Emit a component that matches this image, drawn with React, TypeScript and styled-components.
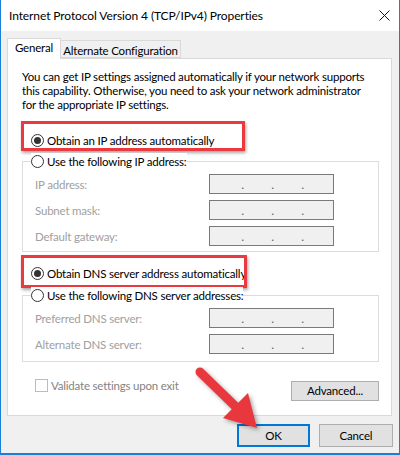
import React from "react";
import styled, { createGlobalStyle } from "styled-components";

const Global = createGlobalStyle`
  html, body { margin: 0; padding: 0; background: #ffffff; }
  body { font-family: Lato, "Noto Sans", Arial, sans-serif; }
  * { box-sizing: border-box; }
`;

const Window = styled.div`
  position: relative;
  width: 400px;
  height: 455px;
  border: 1px solid #1a7fd6;
  border-top: none;
  border-bottom-width: 2px;
  background: #f0f0f0;
  display: flex;
  flex-direction: column;
  font-size: 11.5px;
  letter-spacing: -0.2px;
  color: #000;
  overflow: hidden;
`;

const TitleBar = styled.div`
  height: 31px;
  flex: none;
  background: #ffffff;
  display: flex;
  align-items: center;
  justify-content: space-between;
  padding-left: 8px;
`;

const Title = styled.div`
  font-size: 12px;
  letter-spacing: -0.1px;
  line-height: 16px;
  color: #000;
  white-space: nowrap;
`;

const CloseBox = styled.div`
  width: 30px;
  height: 31px;
  display: flex;
  align-items: center;
  justify-content: center;
`;

const Body = styled.div`
  flex: 1;
  display: flex;
  flex-direction: column;
  padding: 7px 7px 0 6px;
`;

const Tabs = styled.div`
  display: flex;
  align-items: flex-end;
  height: 20px;
  flex: none;
`;

const Tab = styled.div<{ $active?: boolean; $w: number }>`
  width: ${(p) => p.$w}px;
  height: ${(p) => (p.$active ? 21 : 18)}px;
  margin-bottom: ${(p) => (p.$active ? -1 : 0)}px;
  margin-left: ${(p) => (p.$active ? 0 : -1)}px;
  border: 1px solid #d9d9d9;
  border-bottom: ${(p) => (p.$active ? "none" : "1px solid #d9d9d9")};
  background: ${(p) => (p.$active ? "#ffffff" : "#f0f0f0")};
  position: relative;
  z-index: ${(p) => (p.$active ? 2 : 1)};
  text-align: center;
  line-height: 14px;
  padding-top: ${(p) => (p.$active ? 2 : 3)}px;
  white-space: nowrap;
`;

const Panel = styled.div`
  height: 358px;
  flex: none;
  background: #ffffff;
  border: 1px solid #d9d9d9;
  display: flex;
  flex-direction: column;
  padding: 0 12px 0 14px;
  position: relative;
  z-index: 1;
`;

const Intro = styled.p`
  margin: 11px 0 0 0;
  line-height: 14px;
  color: #000;
  white-space: nowrap;
`;

const RadioRow = styled.label<{ $mt?: number }>`
  position: relative;
  display: flex;
  align-items: center;
  gap: 3px;
  height: 16px;
  margin-top: ${(p) => p.$mt ?? 0}px;
  margin-left: 9px;
  white-space: nowrap;
  background: #fff;
`;

const RadioCircle = styled.span<{ $checked?: boolean }>`
  width: 13px;
  height: 13px;
  border-radius: 50%;
  border: 1px solid #333333;
  background: #fff;
  display: flex;
  align-items: center;
  justify-content: center;
  flex: none;
  &::after {
    content: "";
    width: 7px;
    height: 7px;
    border-radius: 50%;
    background: ${(p) => (p.$checked ? "#333333" : "transparent")};
  }
`;

const Highlight = styled.span<{ $top: number; $h: number; $w: number }>`
  position: absolute;
  left: -10px;
  top: ${(p) => p.$top}px;
  width: ${(p) => p.$w}px;
  height: ${(p) => p.$h}px;
  border: 3px solid #ea3a3f;
  box-shadow: 1px 2px 3px rgba(0, 0, 0, 0.35);
  pointer-events: none;
`;

const Group = styled.fieldset<{ $mt: number; $pb: number }>`
  margin: ${(p) => p.$mt}px 0 0 0;
  width: 357px;
  padding: 0 0 ${(p) => p.$pb}px 0;
  border: 1px solid #dcdcdc;
  min-width: 0;
`;

const Legend = styled.legend`
  padding: 0;
  margin-left: 8px;
  & > label {
    margin-left: 0;
  }
`;

const Fields = styled.div`
  display: flex;
  flex-direction: column;
  gap: 6px;
  padding: 5px 0 0 12px;
`;

const FieldRow = styled.div`
  display: flex;
  align-items: center;
  height: 20px;
`;

const FieldLabel = styled.span`
  width: 174px;
  color: #a0a0a0;
  white-space: nowrap;
`;

const IpBox = styled.div`
  width: 125px;
  height: 20px;
  border: 1px solid #7a7a7a;
  background: #f0f0f0;
  display: flex;
  align-items: center;
  gap: 27px;
  padding-left: 31px;
`;

const Dot = styled.span`
  width: 3px;
  text-align: center;
  color: #5a5a8a;
  line-height: 12px;
  font-size: 12px;
  position: relative;
  top: 1px;
`;

const Footer = styled.div`
  margin-top: 16px;
  display: flex;
  justify-content: space-between;
  align-items: flex-start;
  padding-left: 13px;
`;

const CheckRow = styled.label`
  display: flex;
  align-items: center;
  gap: 3px;
  height: 14px;
  color: #838383;
  white-space: nowrap;
`;

const CheckBox = styled.span`
  width: 13px;
  height: 13px;
  border: 1px solid #bcbcbc;
  background: #fff;
  flex: none;
`;

const Button = styled.button<{ $w: number; $h: number; $primary?: boolean; $mt?: number }>`
  width: ${(p) => p.$w}px;
  height: ${(p) => p.$h}px;
  margin-top: ${(p) => p.$mt ?? 0}px;
  background: #e1e1e1;
  border: ${(p) => (p.$primary ? "2px solid #0078d7" : "1px solid #adadad")};
  font-family: inherit;
  font-size: 11.5px;
  letter-spacing: -0.2px;
  color: #000;
  padding: 0;
  line-height: 14px;
`;

const ButtonRow = styled.div`
  display: flex;
  justify-content: flex-end;
  gap: 9px;
  margin-top: 8px;
  margin-right: -1px;
`;

const ArrowSvg = styled.svg`
  position: absolute;
  left: 185px;
  top: 358px;
  z-index: 5;
  filter: drop-shadow(2px 2px 2px rgba(0, 0, 0, 0.35));
  pointer-events: none;
`;

function IpField() {
  return (
    <IpBox>
      <Dot>.</Dot>
      <Dot>.</Dot>
      <Dot>.</Dot>
    </IpBox>
  );
}

export default function App() {
  return (
    <>
      <Global />
      <Window>
        <TitleBar>
          <Title>Internet Protocol Version 4 (TCP/IPv4) Properties</Title>
          <CloseBox>
            <svg width="11" height="11" viewBox="0 0 11 11">
              <path d="M0.5 0.5 L10.5 10.5 M10.5 0.5 L0.5 10.5" stroke="#111" strokeWidth="1" />
            </svg>
          </CloseBox>
        </TitleBar>
        <Body>
          <Tabs>
            <Tab $active $w={54}>General</Tab>
            <Tab $w={121}>Alternate Configuration</Tab>
          </Tabs>
          <Panel>
            <Intro>
              You can get IP settings assigned automatically if your network supports
              <br />
              this capability. Otherwise, you need to ask your network administrator
              <br />
              for the appropriate IP settings.
            </Intro>
            <RadioRow $mt={20}>
              <RadioCircle $checked />
              Obtain an IP address automatically
              <Highlight $top={-11} $h={30} $w={224} />
            </RadioRow>
            <Group $mt={5} $pb={5}>
              <Legend>
                <RadioRow>
                  <RadioCircle />
                  Use the following IP address:
                </RadioRow>
              </Legend>
              <Fields>
                <FieldRow>
                  <FieldLabel>IP address:</FieldLabel>
                  <IpField />
                </FieldRow>
                <FieldRow>
                  <FieldLabel>Subnet mask:</FieldLabel>
                  <IpField />
                </FieldRow>
                <FieldRow>
                  <FieldLabel>Default gateway:</FieldLabel>
                  <IpField />
                </FieldRow>
              </Fields>
            </Group>
            <RadioRow $mt={13}>
              <RadioCircle $checked />
              Obtain DNS server address automatically
              <Highlight $top={-10} $h={33} $w={226} />
            </RadioRow>
            <Group $mt={6} $pb={7}>
              <Legend>
                <RadioRow>
                  <RadioCircle />
                  Use the following DNS server addresses:
                </RadioRow>
              </Legend>
              <Fields>
                <FieldRow>
                  <FieldLabel>Preferred DNS server:</FieldLabel>
                  <IpField />
                </FieldRow>
                <FieldRow>
                  <FieldLabel>Alternate DNS server:</FieldLabel>
                  <IpField />
                </FieldRow>
              </Fields>
            </Group>
            <Footer>
              <CheckRow>
                <CheckBox />
                Validate settings upon exit
              </CheckRow>
              <Button $w={88} $h={20} $mt={3}>Advanced...</Button>
            </Footer>
          </Panel>
          <ButtonRow>
            <Button $w={73} $h={23} $primary>OK</Button>
            <Button $w={74} $h={23}>Cancel</Button>
          </ButtonRow>
        </Body>
        <ArrowSvg width="90" height="80" viewBox="0 0 90 80">
          <line x1="14" y1="14" x2="50" y2="49" stroke="#e8383d" strokeWidth="9" strokeLinecap="round" />
          <polygon points="71,70 37,60 62,35" fill="#e8383d" />
        </ArrowSvg>
      </Window>
    </>
  );
}
